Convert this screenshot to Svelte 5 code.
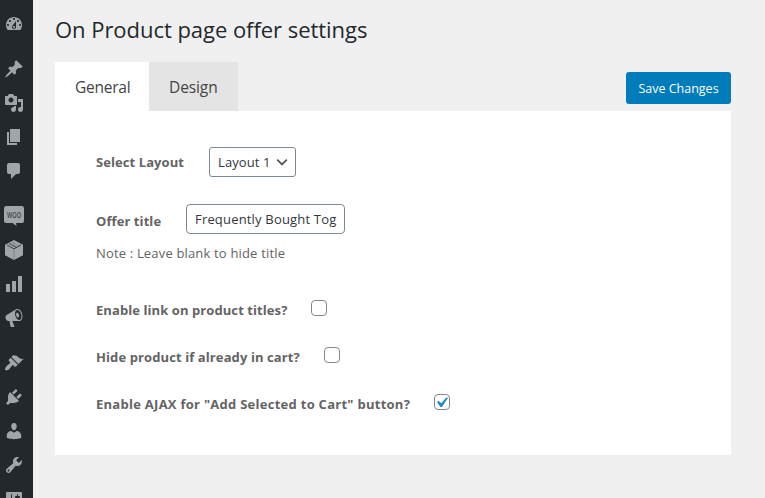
<script>
  const menu = [
    { name: 'Dashboard', d: 'M3.76 16h12.48c1.1-1.37 1.76-3.11 1.76-5 0-4.42-3.58-8-8-8s-8 3.58-8 8c0 1.89.66 3.63 1.76 5zM10 4c.55 0 1 .45 1 1s-.45 1-1 1-1-.45-1-1 .45-1 1-1zM6 6c.55 0 1 .45 1 1s-.45 1-1 1-1-.45-1-1 .45-1 1-1zm8 0c.55 0 1 .45 1 1s-.45 1-1 1-1-.45-1-1 .45-1 1-1zm-5.37 5.55L12 7v6c0 1.1-.9 2-2 2s-2-.9-2-2c0-.57.24-1.08.63-1.45zM4 10c.55 0 1 .45 1 1s-.45 1-1 1-1-.45-1-1 .45-1 1-1zm12 0c.55 0 1 .45 1 1s-.45 1-1 1-1-.45-1-1 .45-1 1-1zm-5 3c0-.55-.45-1-1-1s-1 .45-1 1 .45 1 1 1 1-.45 1-1z' },
    { name: 'Posts', gap: true, d: 'M10.44 3.02l1.82-1.82 6.36 6.35-1.83 1.82c-1.05-.68-2.48-.57-3.41.36l-.75.75c-.92.93-1.04 2.35-.35 3.41l-1.83 1.82-2.41-2.41-2.8 2.79c-.42.42-3.38 2.71-3.8 2.29s1.86-3.39 2.28-3.81l2.79-2.79L4.1 9.36l1.83-1.82c1.05.69 2.48.57 3.4-.36l.75-.75c.93-.92 1.05-2.35.36-3.41z' },
    { name: 'Media', d: 'M13 11V4c0-.55-.45-1-1-1h-1.67L9 1H5L3.67 3H2c-.55 0-1 .45-1 1v7c0 .55.45 1 1 1h10c.55 0 1-.45 1-1zM7 4.5c1.38 0 2.5 1.12 2.5 2.5S8.38 9.5 7 9.5 4.5 8.38 4.5 7 5.62 4.5 7 4.5zM14 6h5v10.5c0 1.38-1.12 2.5-2.5 2.5S14 17.88 14 16.5s1.12-2.5 2.5-2.5c.17 0 .34.02.5.05V9h-3V6zm-4 8.05V13h2v3.5c0 1.38-1.12 2.5-2.5 2.5S7 17.88 7 16.5 8.12 14 9.5 14c.17 0 .34.02.5.05z' },
    { name: 'Pages', d: 'M6 15V2h10v13H6zm-1 1h8v2H3V5h2v11z' },
    { name: 'Comments', d: 'M5 2h9c1.1 0 2 .9 2 2v7c0 1.1-.9 2-2 2h-2l-5 5v-5H5c-1.1 0-2-.9-2-2V4c0-1.1.9-2 2-2z' },
    { name: 'WooCommerce', gap: true, woo: true, d: 'M2.200 0h15.600Q20 0 20 2.200V15Q20 17 17.800 17H12l.5 3-4-3H2.200Q0 17 0 15V2.200Q0 0 2.200 0z' },
    { name: 'Products', box: true, d: 'M10 0l9 4.800v10.400L10 20l-9-4.800V4.800z' },
    { name: 'Analytics', d: 'M18 18V2h-4v16h4zm-6 0V7H8v11h4zm-6 0v-8H2v8h4z' },
    { name: 'Marketing', d: 'M18.15 5.94c.46 1.62.38 3.22-.02 4.48-.42 1.28-1.26 2.18-2.3 2.48-.16.06-.26.06-.4.06-.06.02-.12.02-.18.02-.06.02-.14.02-.22.02h-6.8l2.22 5.5c.02.14-.06.26-.14.34-.08.1-.24.16-.34.16H6.95c-.1 0-.26-.06-.34-.16-.08-.08-.16-.2-.14-.34l-1-5.5H4.25l-.02-.02c-.5.06-1.08-.18-1.54-.62s-.88-1.08-1.06-1.88c-.24-.8-.2-1.56-.02-2.2.18-.62.58-1.08 1.06-1.3l.02-.02 9-5.4c.1-.06.18-.1.24-.16.06-.04.14-.08.24-.12.16-.08.28-.12.5-.18 1.04-.3 2.24.1 3.22.98s1.84 2.24 2.26 3.86zm-2.58 5.98h-.02c.4-.1.74-.34 1.04-.7.58-.7.86-1.76.86-3.04 0-.64-.1-1.3-.28-1.98-.34-1.36-1.02-2.5-1.78-3.24s-1.68-1.1-2.46-.88c-.82.22-1.4.96-1.7 2-.32 1.04-.28 2.36.06 3.72.38 1.36 1 2.5 1.8 3.24.78.74 1.62 1.1 2.48.88zm-2.54-7.08c.22-.04.42-.02.62.04.38.16.76.48 1.02 1s.42 1.2.42 1.78c0 .3-.04.56-.12.8-.18.48-.44.84-.86.94-.34.1-.8-.06-1.14-.4s-.64-.86-.78-1.5c-.18-.62-.12-1.24.02-1.72s.48-.84.82-.94z' },
    { name: 'Appearance', gap: true, d: 'M14.48 11.06L7.41 3.99l1.5-1.5c.5-.56 2.3-.47 3.51.32 1.21.8 1.43 1.28 2.91 2.1 1.18.64 2.45 1.26 4.45.85zm-.71.71L6.7 4.7 4.93 6.47c-.39.39-.39 1.02 0 1.41l1.06 1.06c.39.39.39 1.03 0 1.42-.6.6-1.43 1.11-2.21 1.69-.35.26-.7.53-1.01.84C1.43 14.23.4 16.08 1.4 17.07c.99 1 2.84-.03 4.18-1.36.31-.31.58-.66.85-1.02.57-.78 1.08-1.61 1.69-2.21.39-.39 1.02-.39 1.41 0l1.06 1.06c.39.39 1.02.39 1.41 0z' },
    { name: 'Plugins', d: 'M13.11 4.36L9.87 7.6 8 5.73l3.24-3.24c.35-.34 1.05-.2 1.56.32.52.51.66 1.21.31 1.55zm-8 1.77l.91-1.12 9.01 9.01-1.19.84c-.71.71-2.63 1.16-3.82 1.16H6.14L4.9 17.26c-.59.59-1.54.59-2.12 0-.59-.58-.59-1.53 0-2.12l1.24-1.24v-3.88c0-1.13.4-3.19 1.09-3.89zm7.26 3.97l3.24-3.24c.34-.35 1.04-.21 1.55.31.52.51.66 1.21.31 1.55l-3.24 3.25z' },
    { name: 'Users', d: 'M10 9.25c-2.27 0-2.73-3.44-2.73-3.44C7 4.02 7.82 2 9.97 2c2.16 0 2.98 2.02 2.71 3.81 0 0-.41 3.44-2.68 3.44zm0 2.57L12.72 10c2.39 0 4.52 2.33 4.52 4.53v2.49s-3.65 1.13-7.24 1.13c-3.65 0-7.24-1.13-7.24-1.13v-2.49c0-2.25 1.94-4.48 4.47-4.48z' },
    { name: 'Tools', d: 'M16.68 9.77c-1.34 1.34-3.3 1.67-4.95.99l-5.41 6.52c-.99.99-2.59.99-3.58 0s-.99-2.59 0-3.57l6.52-5.42c-.68-1.65-.35-3.61.99-4.95 1.28-1.28 3.12-1.62 4.72-1.06l-2.89 2.89 2.82 2.82 2.86-2.87c.53 1.58.18 3.39-1.08 4.65zM3.81 16.21c.4.39 1.04.39 1.43 0 .4-.4.4-1.04 0-1.43-.39-.4-1.03-.4-1.43 0-.39.39-.39 1.03 0 1.43z' },
    { name: 'Settings', d: 'M18 16V4c0-.55-.45-1-1-1H3c-.55 0-1 .45-1 1v12c0 .55.45 1 1 1h14c.55 0 1-.45 1-1zM8 11h1c.55 0 1 .45 1 1s-.45 1-1 1H8v1.5c0 .28-.22.5-.5.5s-.5-.22-.5-.5V13H6c-.55 0-1-.45-1-1s.45-1 1-1h1V5.5c0-.28.22-.5.5-.5s.5.22.5.5V11zm5-2h-1c-.55 0-1-.45-1-1s.45-1 1-1h1V5.5c0-.28.22-.5.5-.5s.5.22.5.5V7h1c.55 0 1 .45 1 1s-.45 1-1 1h-1v5.5c0 .28-.22.5-.5.5s-.5-.22-.5-.5V9z' },
  ];

  let checks = $state([
    { label: 'Enable link on product titles?', on: false, cls: 'c1' },
    { label: 'Hide product if already in cart?', on: false, cls: 'c2' },
    { label: 'Enable AJAX for "Add Selected to Cart" button?', on: true, cls: 'c3' },
  ]);
</script>

<div class="app">
  <nav>
    {#each menu as item}
      <a class:gap={item.gap} href="#top" aria-label={item.name}>
        <svg viewBox="0 0 20 20" width="20" height="20">
          <path d={item.d} />
          {#if item.woo}
            <text x="10" y="11.500" text-anchor="middle" textLength="14" lengthAdjust="spacingAndGlyphs">WOO</text>
          {/if}
          {#if item.box}
            <path class="seam" d="M3 5l7 3.800L17 5M5.300 3.500l7.200 3.900" />
            <path class="seam faint" d="M10 9V19.500M8 2.300l7.500 4" />
          {/if}
        </svg>
      </a>
    {/each}
  </nav>

  <main>
    <h1><span>On Product page offer settings</span></h1>
    <div class="bar">
      <div class="tabs">
        <button class="tab active"><span>General</span></button>
        <button class="tab"><span>Design</span></button>
      </div>
      <button class="save"><span>Save Changes</span></button>
    </div>
    <section>
      <div class="row layout">
        <b>Select Layout</b>
        <div class="select">
          <span>Layout 1</span>
          <svg viewBox="0 0 20 20" width="16" height="16"><path d="M4 7l6 6 6-6" /></svg>
        </div>
      </div>
      <div class="row title">
        <b>Offer title</b>
        <div class="input"><span>Frequently Bought Tog</span></div>
      </div>
      <p><span>Note : Leave blank to hide title</span></p>
      {#each checks as c}
        <div class="row check {c.cls}">
          <b>{c.label}</b>
          <button class="cb" role="checkbox" aria-checked={c.on} aria-label={c.label} onclick={() => (c.on = !c.on)}>
            {#if c.on}
              <svg viewBox="0 0 20 20" width="21" height="21"><path d="M14.83 4.890l1.340.94-5.810 8.380H9.020L5.780 9.670l1.340-1.250 2.570 2.400z" /></svg>
            {/if}
          </button>
        </div>
      {/each}
    </section>
  </main>
</div>

<style>
  :global(body) { margin: 0; background: #f0f0f0; overflow: hidden; }
  .app {
    display: flex;
    height: 498px;
    overflow: hidden;
    background: #f0f0f0;
    font-family: "Open Sans", "Noto Sans", sans-serif;
    font-size: 13px;
    color: #646464;
  }
  span, b { white-space: nowrap; }
  button { font: inherit; border: 0; padding: 0; margin: 0; color: inherit; }
  nav {
    width: 33px;
    flex: none;
    box-sizing: border-box;
    padding-top: 7px;
    background: #23282d;
    display: flex;
    flex-direction: column;
  }
  nav a { flex: none; height: 34px; padding: 7px 0 0 4.400px; box-sizing: border-box; }
  nav a.gap { margin-top: 11px; }
  nav svg { display: block; fill: #a0a5aa; overflow: visible; }
  nav text { font: 600 8px "Open Sans", sans-serif; fill: #3c4247; }
  nav .seam { fill: none; stroke: #23282d; stroke-width: .8; }
  nav .faint { stroke-width: .25; }

  main { width: 676px; margin-left: 22px; }
  h1 {
    margin: 0;
    height: 62px;
    line-height: 59px;
    font-size: 22px;
    font-weight: 400;
    letter-spacing: -.04px;
    color: #23282d;
  }
  .bar { display: flex; justify-content: space-between; height: 49px; }
  .tabs { display: flex; }
  .tab { height: 49px; padding: 1px 0 0 20px; text-align: left; font-size: 15.500px; color: #444; background: #e4e4e4; width: 89px; letter-spacing: -.1px; }
  .tab.active { background: #fff; width: 94px; letter-spacing: -.25px; }
  .save { margin-top: 10px; width: 105px; height: 32px; border-radius: 3px; background: #007cba; color: #fff; font-size: 12.500px; }
  section { height: 344px; box-sizing: border-box; background: #fff; padding: 36px 0 0 41px; }
  .row { display: flex; align-items: center; }
  b { font-weight: 700; letter-spacing: .08px; }
  .select, .input {
    display: flex;
    align-items: center;
    box-sizing: border-box;
    height: 30px;
    padding-left: 8px;
    border: 1px solid #7e8993;
    border-radius: 3px;
    color: #32373c;
    letter-spacing: .18px;
  }
  .layout b { width: 113px; }
  .select { width: 87px; }
  .select span { width: 56px; letter-spacing: .1px; }
  .select svg { fill: none; stroke: #555; stroke-width: 2.200; }
  .title { margin-top: 27px; }
  .title b { width: 90px; padding-top: 4px; }
  .input { width: 159px; border-radius: 4px; }
  p { margin: 9px 0 0; line-height: 20px; font-size: 13px; letter-spacing: .17px; }
  .check { height: 20px; }
  .cb {
    display: flex;
    align-items: center;
    justify-content: center;
    width: 16px;
    height: 16px;
    margin-bottom: 4px;
    flex: none;
    box-sizing: border-box;
    border: 1px solid #7e8993;
    border-radius: 4px;
    background: #fff;
  }
  .cb svg { flex: none; fill: #1e8cbe; margin-left: -1.500px; }
  .c1 { margin-top: 37px; }
  .c2, .c3 { margin-top: 27px; }
  .c1 b { width: 215px; }
  .c2 b { width: 228px; letter-spacing: .1px; }
  .c3 b { width: 338px; letter-spacing: .27px; }
</style>
